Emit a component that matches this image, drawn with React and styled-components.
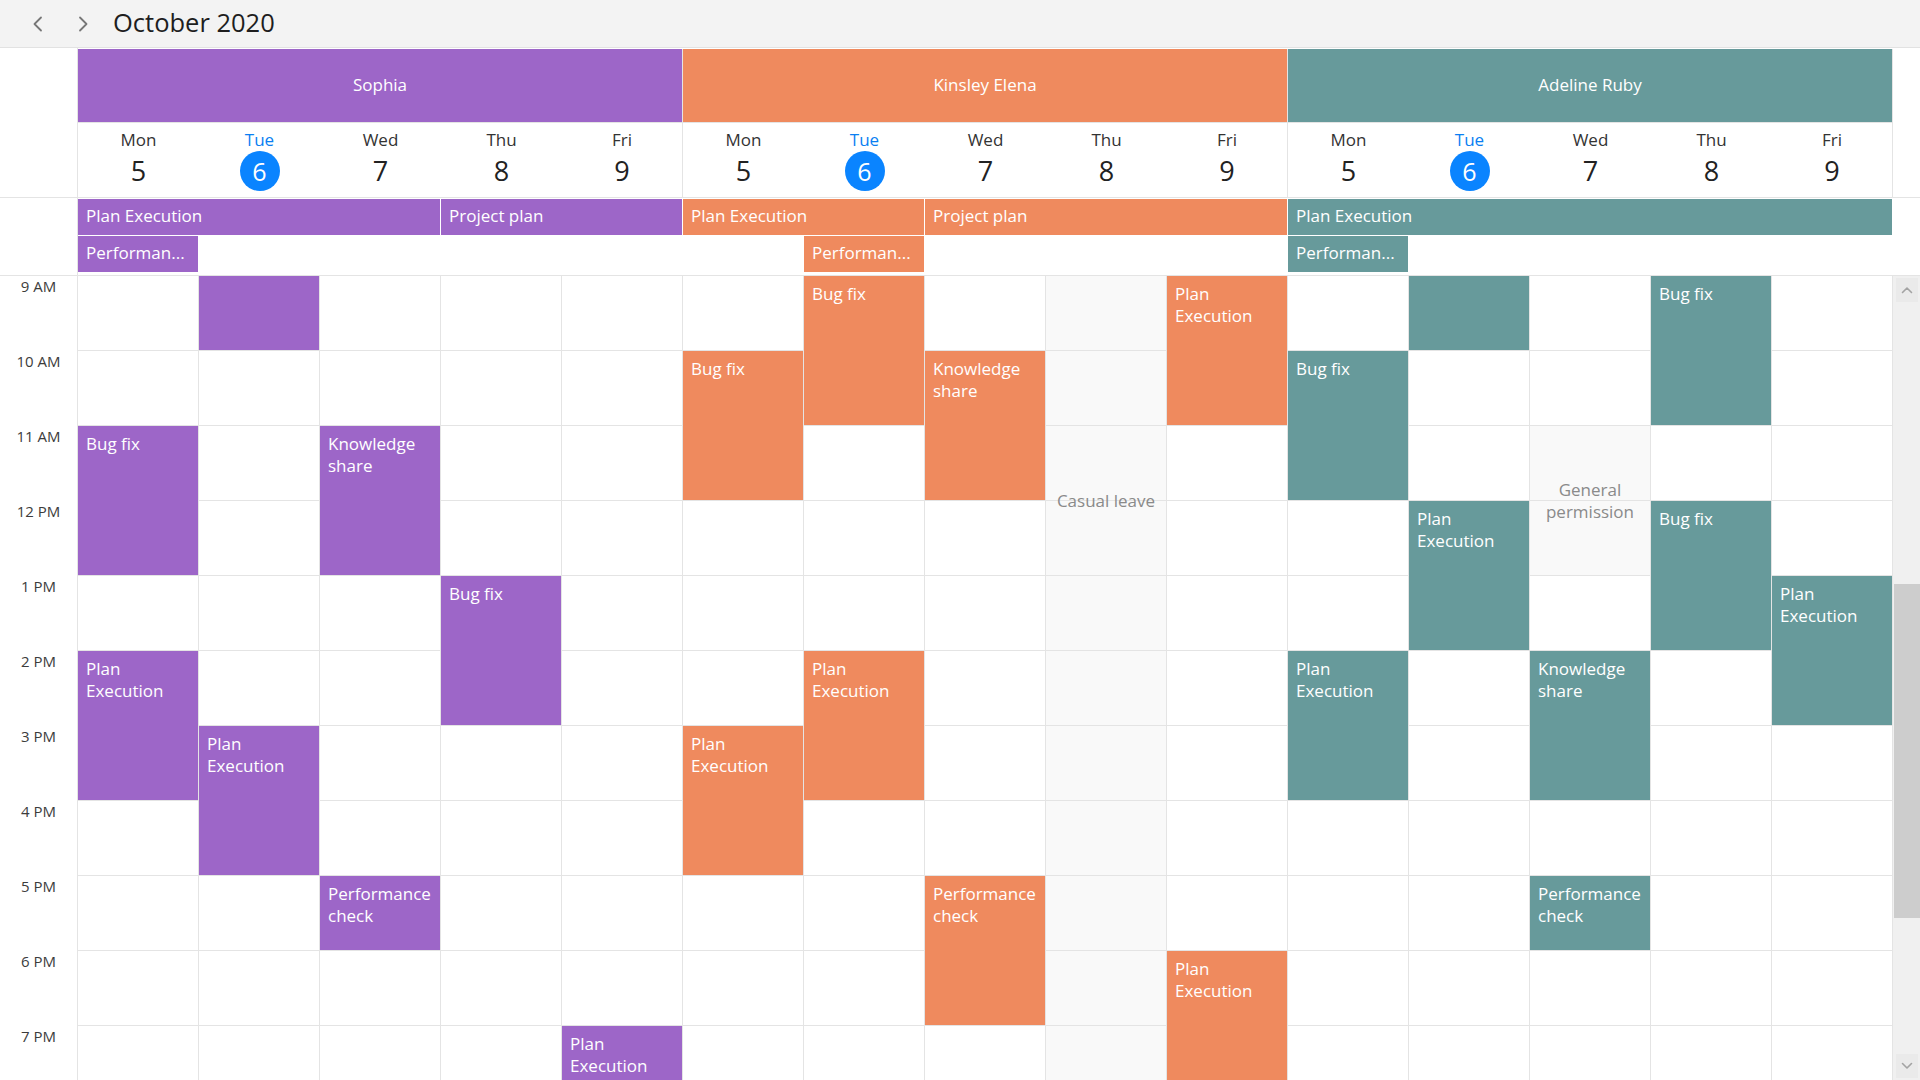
import React from 'react';
import styled, { createGlobalStyle } from 'styled-components';

const FONT = `"Open Sans", "Noto Sans", "Liberation Sans", sans-serif`;
const LINE = '#e4e4e4';
const DAY_W = 121;
const TIME_W = 78;
const HOUR_H = 75;
const FIRST_HOUR = 9;
const HOURS = 12;
const VISIBLE_LABELS = 11;

const GlobalStyle = createGlobalStyle`
  html, body { margin: 0; padding: 0; background: #fff; }
  body { font-family: ${FONT}; }
  *, *::before, *::after { box-sizing: border-box; }
`;

const Page = styled.div`
  width: 1920px;
  height: 1080px;
  overflow: hidden;
  display: flex;
  flex-direction: column;
  background: #fff;
  color: #222;
`;

const Toolbar = styled.div`
  height: 48px;
  flex: none;
  display: flex;
  align-items: center;
  background: #f3f3f3;
  border-bottom: 1px solid #e2e2e2;
  padding-left: 32px;
`;

const NavGroup = styled.div`
  display: flex;
  align-items: center;
  gap: 33px;
`;

const NavButton = styled.button`
  width: 12px;
  height: 16px;
  padding: 0;
  border: 0;
  background: transparent;
  display: flex;
  align-items: center;
  justify-content: center;
  cursor: pointer;
`;

const Title = styled.h1`
  margin: 0 0 2px 24px;
  font-size: 25.5px;
  font-weight: 400;
  color: #1e1e1e;
  line-height: 1;
`;

const HeaderGrid = styled.div`
  flex: none;
  display: grid;
  grid-template-columns: ${TIME_W}px repeat(15, ${DAY_W}px) 1fr;
  grid-template-rows: 75px 75px;
`;

const Corner = styled.div`
  grid-column: 1;
  grid-row: 1 / span 2;
  border-right: 1px solid ${LINE};
  border-bottom: 1px solid ${LINE};
`;

const ResourceCell = styled.div`
  grid-row: 1;
  grid-column: span 5;
  margin-top: 1px;
  padding-bottom: 2px;
  background: ${(p) => p.$color};
  border-right: 1px solid ${LINE};
  border-bottom: 1px solid ${LINE};
  display: flex;
  align-items: center;
  justify-content: center;
  color: #fff;
  font-size: 17px;
`;

const HeaderFiller = styled.div`
  grid-column: 17;
  grid-row: ${(p) => p.$row};
  border-bottom: ${(p) => (p.$row === 2 ? `1px solid ${LINE}` : 'none')};
`;

const DateCell = styled.div`
  grid-row: 2;
  display: flex;
  flex-direction: column;
  align-items: center;
  padding-top: 6px;
  border-bottom: 1px solid ${LINE};
  border-right: ${(p) => (p.$last ? `1px solid ${LINE}` : 'none')};
`;

const DayName = styled.div`
  font-size: 17px;
  line-height: 22px;
  color: ${(p) => (p.$today ? '#0a7ff2' : '#333')};
`;

const DayNumber = styled.div`
  width: 40px;
  height: 40px;
  border-radius: 50%;
  display: flex;
  align-items: center;
  justify-content: center;
  font-size: ${(p) => (p.$today ? '25px' : '27px')};
  line-height: 40px;
  color: ${(p) => (p.$today ? '#fff' : '#222')};
  background: ${(p) => (p.$today ? '#0a84ff' : 'transparent')};
`;

const AllDayRow = styled.div`
  flex: none;
  height: 78px;
  display: flex;
  border-bottom: 1px solid ${LINE};
`;

const AllDayCorner = styled.div`
  width: ${TIME_W}px;
  flex: none;
  border-right: 1px solid ${LINE};
`;

const AllDayGrid = styled.div`
  display: grid;
  grid-template-columns: repeat(15, ${DAY_W}px);
  grid-template-rows: 36px 36px;
  row-gap: 1px;
  padding-top: 1px;
  align-content: start;
`;

const AllDayEvent = styled.div`
  grid-column: ${(p) => p.$col + 1} / span ${(p) => p.$span};
  grid-row: ${(p) => p.$row};
  margin-right: 1px;
  background: ${(p) => p.$color};
  color: #fff;
  font-size: 17px;
  line-height: 34px;
  padding: 0 8px;
  white-space: nowrap;
  overflow: hidden;
`;

const Body = styled.div`
  flex: 1;
  min-height: 0;
  display: flex;
  overflow: hidden;
`;

const TimeColumn = styled.div`
  width: ${TIME_W}px;
  flex: none;
  border-right: 1px solid ${LINE};
`;

const TimeLabel = styled.div`
  height: ${HOUR_H}px;
  text-align: center;
  font-size: 15px;
  line-height: 21px;
  color: #3c3c3c;
`;

const DaysArea = styled.div`
  position: relative;
  width: ${DAY_W * 15}px;
  flex: none;
  align-self: flex-start;
`;

const CellGrid = styled.div`
  display: grid;
  grid-template-columns: repeat(15, ${DAY_W}px);
  grid-auto-rows: ${HOUR_H}px;
`;

const Cell = styled.div`
  border-right: 1px solid ${LINE};
  border-bottom: 1px solid ${LINE};
  background: ${(p) => (p.$off ? '#f9f9f9' : '#fff')};
`;

const EventLayer = styled.div`
  position: absolute;
  inset: 0;
  display: grid;
  grid-template-columns: repeat(15, ${DAY_W}px);
  grid-auto-rows: ${HOUR_H}px;
`;

const Appointment = styled.div`
  grid-column: ${(p) => p.$col + 1};
  grid-row: ${(p) => p.$row} / span ${(p) => p.$span};
  margin: 0 1px 1px 0;
  background: ${(p) => p.$color};
  color: #fff;
  font-size: 17px;
  line-height: 22px;
  padding: 7px 8px;
  overflow: hidden;
`;

const RegionLabel = styled.div`
  grid-column: ${(p) => p.$col + 1};
  grid-row: ${(p) => p.$row} / span ${(p) => p.$span};
  display: flex;
  align-items: center;
  justify-content: center;
  text-align: center;
  color: #8a8a8a;
  font-size: 17px;
  line-height: 22px;
  padding: 0 8px;
  margin-right: 1px;
`;

const Scrollbar = styled.div`
  width: 27px;
  flex: none;
  background: #f0f0f0;
  display: flex;
  flex-direction: column;
  align-items: stretch;
  padding: 2px 2px 2px 3px;
`;

const ScrollButton = styled.div`
  height: 24px;
  flex: none;
  background: #eaeaea;
  display: flex;
  align-items: center;
  justify-content: center;
`;

const Thumb = styled.div`
  flex: none;
  margin: ${(p) => p.$offset}px -2px 0 -2px;
  height: ${(p) => p.$size}px;
  background: #cdcdcd;
`;

const TrackRest = styled.div`
  flex: 1;
`;

const Chevron = ({ dir }) => (
  <svg width="12" height="16" viewBox="0 0 12 16" fill="none">
    <polyline
      points={dir === 'left' ? '9,1.5 2.5,8 9,14.5' : '3,1.5 9.5,8 3,14.5'}
      stroke="#777"
      strokeWidth="1.8"
      strokeLinecap="round"
      strokeLinejoin="round"
    />
  </svg>
);

const SmallChevron = ({ dir }) => (
  <svg width="12" height="8" viewBox="0 0 12 8" fill="none">
    <polyline
      points={dir === 'up' ? '1.5,6.5 6,2 10.5,6.5' : '1.5,1.5 6,6 10.5,1.5'}
      stroke="#a3a3a3"
      strokeWidth="1.6"
      strokeLinecap="round"
      strokeLinejoin="round"
    />
  </svg>
);

const resources = [
  { name: 'Sophia', color: '#9d66c8' },
  { name: 'Kinsley Elena', color: '#ef8a5e' },
  { name: 'Adeline Ruby', color: '#679a9b' },
];

const days = [
  ['Mon', 5],
  ['Tue', 6],
  ['Wed', 7],
  ['Thu', 8],
  ['Fri', 9],
];

const allDayEvents = [
  { res: 0, day: 0, span: 3, row: 1, title: 'Plan Execution' },
  { res: 0, day: 3, span: 2, row: 1, title: 'Project plan' },
  { res: 0, day: 0, span: 1, row: 2, title: 'Performan...', full: 'Performance check' },
  { res: 1, day: 0, span: 2, row: 1, title: 'Plan Execution' },
  { res: 1, day: 2, span: 3, row: 1, title: 'Project plan' },
  { res: 1, day: 1, span: 1, row: 2, title: 'Performan...', full: 'Performance check' },
  { res: 2, day: 0, span: 5, row: 1, title: 'Plan Execution' },
  { res: 2, day: 0, span: 1, row: 2, title: 'Performan...', full: 'Performance check' },
];

const events = [
  { res: 0, day: 1, start: 9, end: 10, title: '' },
  { res: 0, day: 0, start: 11, end: 13, title: 'Bug fix' },
  { res: 0, day: 2, start: 11, end: 13, title: 'Knowledge share' },
  { res: 0, day: 3, start: 13, end: 15, title: 'Bug fix' },
  { res: 0, day: 0, start: 14, end: 16, title: 'Plan Execution' },
  { res: 0, day: 1, start: 15, end: 17, title: 'Plan Execution' },
  { res: 0, day: 2, start: 17, end: 18, title: 'Performance check' },
  { res: 0, day: 4, start: 19, end: 21, title: 'Plan Execution' },

  { res: 1, day: 1, start: 9, end: 11, title: 'Bug fix' },
  { res: 1, day: 0, start: 10, end: 12, title: 'Bug fix' },
  { res: 1, day: 2, start: 10, end: 12, title: 'Knowledge share' },
  { res: 1, day: 4, start: 9, end: 11, title: 'Plan Execution' },
  { res: 1, day: 1, start: 14, end: 16, title: 'Plan Execution' },
  { res: 1, day: 0, start: 15, end: 17, title: 'Plan Execution' },
  { res: 1, day: 2, start: 17, end: 19, title: 'Performance check' },
  { res: 1, day: 4, start: 18, end: 21, title: 'Plan Execution' },

  { res: 2, day: 1, start: 9, end: 10, title: '' },
  { res: 2, day: 3, start: 9, end: 11, title: 'Bug fix' },
  { res: 2, day: 0, start: 10, end: 12, title: 'Bug fix' },
  { res: 2, day: 1, start: 12, end: 14, title: 'Plan Execution' },
  { res: 2, day: 3, start: 12, end: 14, title: 'Bug fix' },
  { res: 2, day: 4, start: 13, end: 15, title: 'Plan Execution' },
  { res: 2, day: 0, start: 14, end: 16, title: 'Plan Execution' },
  { res: 2, day: 2, start: 14, end: 16, title: 'Knowledge share' },
  { res: 2, day: 2, start: 17, end: 18, title: 'Performance check' },
];

const regions = [
  { res: 1, day: 3, start: 9, end: 21, labelStart: 9, labelEnd: 15, title: 'Casual leave' },
  { res: 2, day: 2, start: 11, end: 13, labelStart: 11, labelEnd: 13, title: 'General permission' },
];

const isOff = (col, hour) =>
  regions.some(
    (r) => r.res * 5 + r.day === col && hour >= r.start && hour < r.end
  );

const hourLabel = (h) => {
  const suffix = h < 12 ? 'AM' : 'PM';
  const v = h % 12 === 0 ? 12 : h % 12;
  return `${v} ${suffix}`;
};

export default function App() {
  const hours = Array.from({ length: HOURS }, (_, i) => FIRST_HOUR + i);
  return (
    <>
      <GlobalStyle />
      <Page>
        <Toolbar>
          <NavGroup>
            <NavButton aria-label="Previous">
              <Chevron dir="left" />
            </NavButton>
            <NavButton aria-label="Next">
              <Chevron dir="right" />
            </NavButton>
          </NavGroup>
          <Title>October 2020</Title>
        </Toolbar>

        <HeaderGrid>
          <Corner />
          {resources.map((r) => (
            <ResourceCell key={r.name} $color={r.color}>
              {r.name}
            </ResourceCell>
          ))}
          <HeaderFiller $row={1} />
          {resources.map((r) =>
            days.map(([name, num], i) => (
              <DateCell key={r.name + name} $last={i === 4}>
                <DayName $today={num === 6}>{name}</DayName>
                <DayNumber $today={num === 6}>{num}</DayNumber>
              </DateCell>
            ))
          )}
          <HeaderFiller $row={2} />
        </HeaderGrid>

        <AllDayRow>
          <AllDayCorner />
          <AllDayGrid>
            {allDayEvents.map((e, i) => (
              <AllDayEvent
                key={i}
                title={e.full || e.title}
                $col={e.res * 5 + e.day}
                $span={e.span}
                $row={e.row}
                $color={resources[e.res].color}
              >
                {e.title}
              </AllDayEvent>
            ))}
          </AllDayGrid>
        </AllDayRow>

        <Body>
          <TimeColumn>
            {hours.slice(0, VISIBLE_LABELS).map((h) => (
              <TimeLabel key={h}>{hourLabel(h)}</TimeLabel>
            ))}
          </TimeColumn>
          <DaysArea>
            <CellGrid>
              {hours.map((h) =>
                Array.from({ length: 15 }, (_, c) => (
                  <Cell key={`${h}-${c}`} $off={isOff(c, h)} />
                ))
              )}
            </CellGrid>
            <EventLayer>
              {regions.map((r, i) => (
                <RegionLabel
                  key={`r${i}`}
                  $col={r.res * 5 + r.day}
                  $row={r.labelStart - FIRST_HOUR + 1}
                  $span={r.labelEnd - r.labelStart}
                >
                  {r.title}
                </RegionLabel>
              ))}
              {events.map((e, i) => (
                <Appointment
                  key={i}
                  $col={e.res * 5 + e.day}
                  $row={e.start - FIRST_HOUR + 1}
                  $span={e.end - e.start}
                  $color={resources[e.res].color}
                >
                  {e.title}
                </Appointment>
              ))}
            </EventLayer>
          </DaysArea>
          <Scrollbar>
            <ScrollButton>
              <SmallChevron dir="up" />
            </ScrollButton>
            <Thumb $offset={282} $size={334} />
            <TrackRest />
            <ScrollButton>
              <SmallChevron dir="down" />
            </ScrollButton>
          </Scrollbar>
        </Body>
      </Page>
    </>
  );
}
